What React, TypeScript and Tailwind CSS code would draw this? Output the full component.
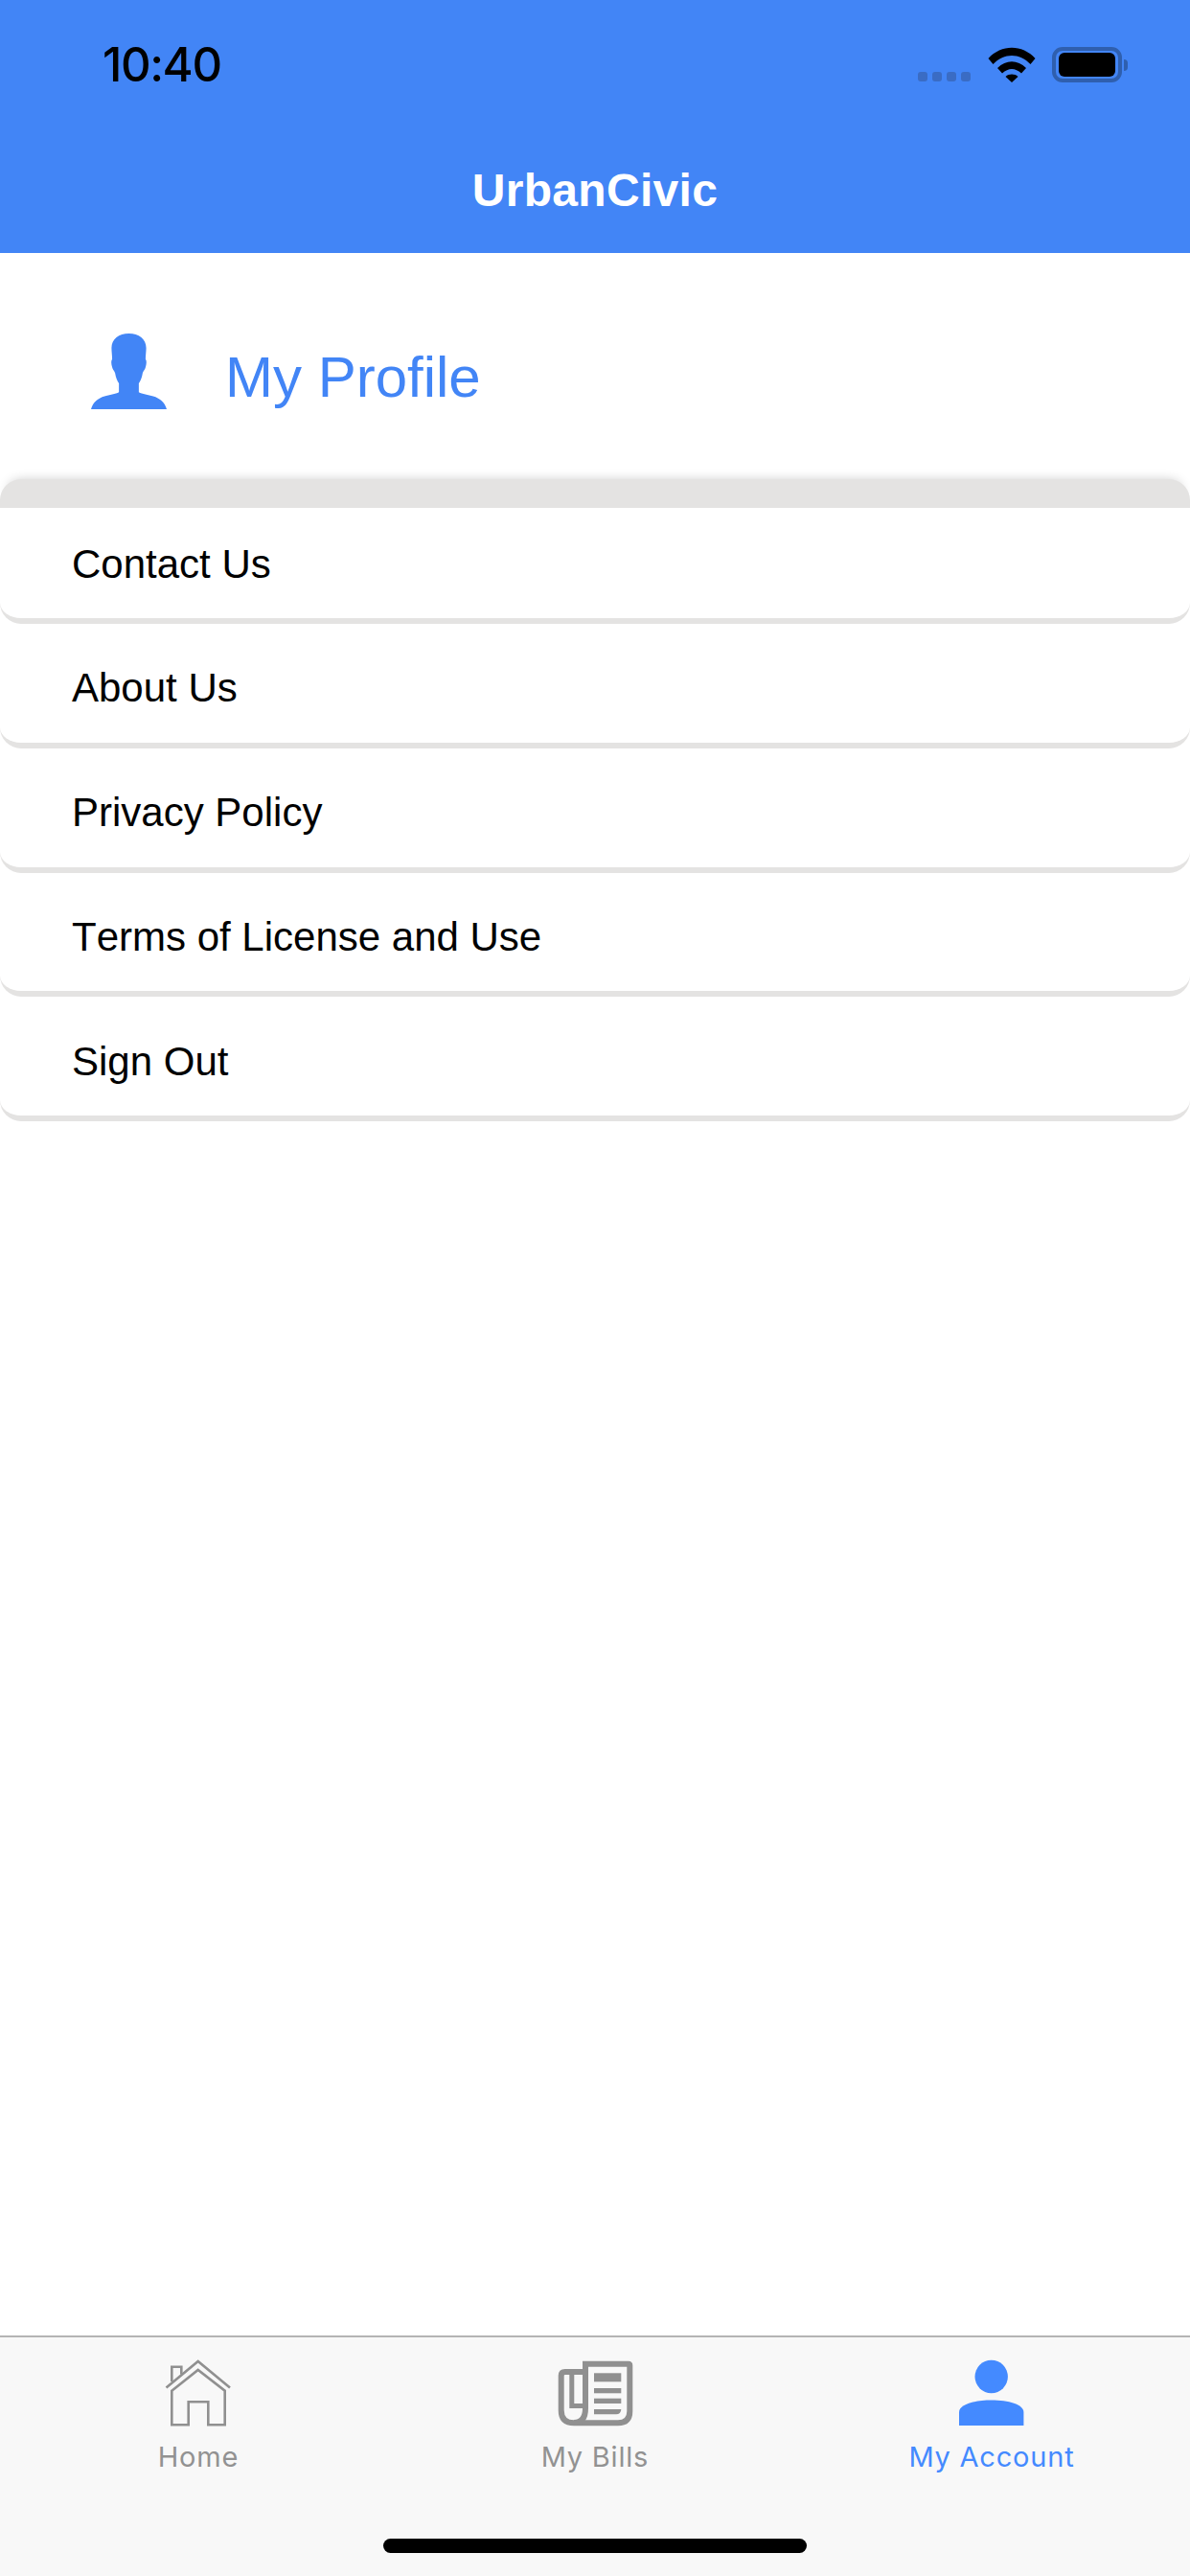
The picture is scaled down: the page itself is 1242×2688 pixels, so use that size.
const SANS = "font-['Liberation_Sans',Arial,sans-serif]";

const MENU = ['Contact Us', 'About Us', 'Privacy Policy', 'Terms of License and Use', 'Sign Out'];

function WifiIcon() {
  return (
    <svg width="50" height="37" viewBox="0 0 50 37" className="block">
      <path d="M0.5 12 C14 -3 36 -3 49.5 12 L44.5 18 C33 6 17 6 5.500 18 Z" fill="#000" />
      <path d="M10 22 C19 13 31 13 40 22 L35 27.500 C28.500 21.500 21.500 21.500 15 27.500 Z" fill="#000" />
      <path d="M18.500 31 C22 27.800 28 27.800 31.500 31 L25 37 Z" fill="#000" />
    </svg>
  );
}

function StatusBar() {
  return (
    <div className="flex h-[100px] items-start justify-between pl-[107px] pr-[65px] pt-[49px]">
      <span className="font-['Inter',sans-serif] text-[49px] font-[550] leading-[37px] tracking-[-1.4px] text-black">10:40</span>
      <div className="flex items-start">
        <div className="mt-[26px] flex gap-[5px]">
          <span className="h-[10px] w-[10px] rounded-[3px] bg-[#3a6cc4]" />
          <span className="h-[10px] w-[10px] rounded-[3px] bg-[#3a6cc4]" />
          <span className="h-[10px] w-[10px] rounded-[3px] bg-[#3a6cc4]" />
          <span className="h-[10px] w-[10px] rounded-[3px] bg-[#3a6cc4]" />
        </div>
        <div className="ml-[18px]"><WifiIcon /></div>
        <div className="ml-[17px] flex items-center">
          <div className="flex h-[37px] w-[73px] items-center justify-center rounded-[11px] border-[4px] border-[#2f5fae]">
            <div className="h-[25px] w-[59px] rounded-[6px] bg-black" />
          </div>
          <div className="ml-[2px] h-[12px] w-[4px] rounded-r-[4px] bg-[#2f5fae]" />
        </div>
      </div>
    </div>
  );
}

function ProfileGlyph() {
  return (
    <svg width="79" height="79" viewBox="78 55 236 236" className="block">
      <path
        fill="#4285f6"
        d="M196 55 C165 55 142 72 142 100 C142 112 144 125 144 135 C140 140 141 150 144 160 C146 168 150 170 153 178 C155 192 160 204 165 210 L165 238 C155 244 135 246 120 251 C100 257 84 270 78 291 L314 291 C308 270 292 257 272 251 C257 246 237 244 227 238 L227 210 C232 204 237 192 239 178 C242 170 246 168 248 160 C251 150 252 140 248 135 C248 125 250 112 250 100 C250 72 227 55 196 55 Z"
      />
    </svg>
  );
}

function HomeIcon() {
  return (
    <svg width="70" height="70" viewBox="0 0 70 70" className="block" fill="none" stroke="#909090" strokeWidth="2.600">
      <path d="M1.500 29.500 L34.700 2 L68 29.500" />
      <path d="M7.300 32.700 L34.700 11 L62.700 32.700 V68.300 H45.300 V44.300 H24.700 V68.300 H7.300 Z" />
      <path d="M7.300 23 V7.700 H17.300 V15.500" />
    </svg>
  );
}

function BillsIcon() {
  return (
    <svg width="80" height="70" viewBox="0 0 80 70" className="block" fill="none" stroke="#909090">
      <path strokeWidth="6" d="M27 4.700 H74.800 Q76.300 4.700 76.300 6.200 V54 Q76.300 66.300 64 66.300 H18 Q4.700 66.300 4.700 53 V17 Q4.700 13 8.700 13 H27" />
      <path strokeWidth="6" d="M30 4.700 V51 Q30 66 18 66" />
      <path strokeWidth="5" d="M15.800 14 V48.500 H30" />
      <g fill="#909090" stroke="none">
        <rect x="39" y="14.300" width="28.300" height="9" />
        <rect x="39" y="30" width="28.300" height="5.300" />
        <rect x="39" y="40.700" width="28.300" height="5.300" />
        <path d="M39 52 H67.300 Q67 57.300 62 57.300 H39 Z" />
      </g>
    </svg>
  );
}

function AccountIcon() {
  return (
    <svg width="68" height="70" viewBox="0 0 68 70" className="block" fill="#448aff">
      <circle cx="33.700" cy="18" r="17.200" />
      <path d="M0 69 V55 C0 47 16 42.500 33.700 42.500 C51.500 42.500 67.400 47 67.400 55 V69 Z" />
    </svg>
  );
}

function Tab({ label, active, children }: { label: string; active?: boolean; children: React.ReactNode }) {
  return (
    <div className="flex flex-col items-center">
      <div className="flex h-[70px] items-center justify-center">{children}</div>
      <span className={`mt-[14px] font-['Inter',sans-serif] text-[29px] leading-[36px] tracking-[0.8px] ${active ? 'text-[#448aff]' : 'text-[#929292]'}`}>
        {label}
      </span>
    </div>
  );
}

export default function App() {
  return (
    <div className={`flex h-[2688px] w-[1242px] flex-col bg-white [font-kerning:none] ${SANS}`}>
      <header className="h-[264px] bg-[#4285f6]">
        <StatusBar />
        <h1 className="mt-[74px] text-center text-[48px] font-bold leading-[50px] tracking-[0.3px] text-white">UrbanCivic</h1>
      </header>

      <section className="flex h-[236px] items-center pl-[95px] pt-[10px]">
        <ProfileGlyph />
        <span className="ml-[61px] mt-[14px] text-[60px] leading-[70px] text-[#4285f6]">My Profile</span>
      </section>

      <div className="h-[30px] rounded-t-[22px] bg-[#e4e3e2] shadow-[0_-7px_12px_-8px_rgba(0,0,0,0.22)]" />

      <nav className="flex flex-col gap-[8.75px]">
        {MENU.map((item) => (
          <div
            key={item}
            className="flex h-[121px] items-center rounded-b-[22px] border-b-[6px] border-[#e4e3e2] pt-[2px] pl-[75px] text-[42px] leading-[48px] text-black"
          >
            {item}
          </div>
        ))}
      </nav>

      <div className="flex-1" />

      <footer className="flex h-[251px] flex-col border-t-2 border-[#b4b4b4] bg-[#f8f8f8]">
        <div className="grid grid-cols-3 pt-[23px]">
          <Tab label="Home"><HomeIcon /></Tab>
          <Tab label="My Bills"><BillsIcon /></Tab>
          <Tab label="My Account" active><AccountIcon /></Tab>
        </div>
        <div className="mx-auto mt-[67px] h-[15px] w-[442px] rounded-full bg-black" />
      </footer>
    </div>
  );
}
